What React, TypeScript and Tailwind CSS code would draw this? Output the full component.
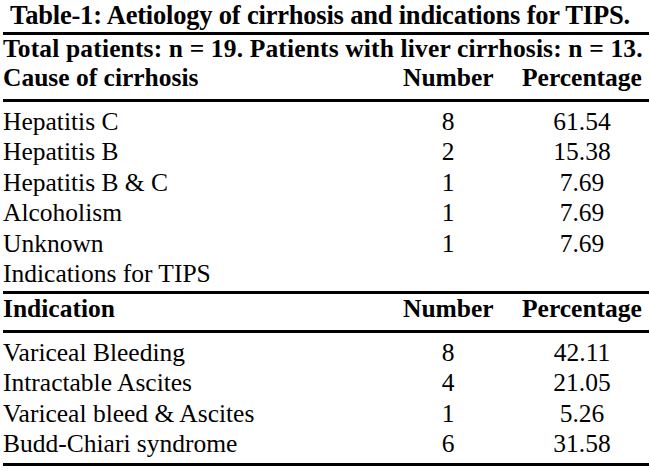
const causes = [
  { label: "Hepatitis C", n: "8", pct: "61.54" },
  { label: "Hepatitis B", n: "2", pct: "15.38" },
  { label: "Hepatitis B & C", n: "1", pct: "7.69" },
  { label: "Alcoholism", n: "1", pct: "7.69" },
  { label: "Unknown", n: "1", pct: "7.69" },
];

const indications = [
  { label: "Variceal Bleeding", n: "8", pct: "42.11" },
  { label: "Intractable Ascites", n: "4", pct: "21.05" },
  { label: "Variceal bleed & Ascites", n: "1", pct: "5.26" },
  { label: "Budd-Chiari syndrome", n: "6", pct: "31.58" },
];

const cols = "grid grid-cols-[1fr_90px_130px] gap-x-[24px] pr-[2px]";

const Row = ({ label, n, pct }: { label: string; n: string; pct: string }) => (
  <div className={`${cols} h-[30.4px] leading-[30.4px]`}>
    <span className="whitespace-nowrap">{label}</span>
    <span className="text-center">{n}</span>
    <span className="text-center">{pct}</span>
  </div>
);

const HeaderRow = ({ label }: { label: string }) => (
  <div className={`${cols} h-[39px] leading-[30px] font-bold border-b-[3px] border-black`}>
    <span>{label}</span>
    <span className="text-center">Number</span>
    <span className="text-center">Percentage</span>
  </div>
);

export default function App() {
  return (
    <div className="w-[650px] h-[471px] bg-white pl-[3px] pr-[1px] text-black text-[25.5px] font-[family-name:Liberation_Serif,Times_New_Roman,serif]">
      {/* Title */}
      <h1 className="h-[35px] leading-[31px] pr-[12px] text-center text-[26.5px] font-bold tracking-[-0.2px] border-b-[3px] border-black whitespace-nowrap">
        Table-1: Aetiology of cirrhosis and indications for TIPS.
      </h1>

      {/* Cirrhosis section */}
      <div className="h-[28px] leading-[28px] font-bold whitespace-nowrap tracking-[0.15px]">
        Total patients: n = 19. Patients with liver cirrhosis: n = 13.
      </div>
      <HeaderRow label="Cause of cirrhosis" />
      <div className="pt-[5px] pb-[1.6px] border-b-[3px] border-black">
        {causes.map((c) => (
          <Row key={c.label} {...c} />
        ))}
        <div className="h-[30.4px] leading-[30.4px]">Indications for TIPS</div>
      </div>

      {/* Indications section */}
      <HeaderRow label="Indication" />
      <div className="pt-[5px] pb-[3.4px] border-b-[3px] border-black">
        {indications.map((r) => (
          <Row key={r.label} {...r} />
        ))}
      </div>
    </div>
  );
}
